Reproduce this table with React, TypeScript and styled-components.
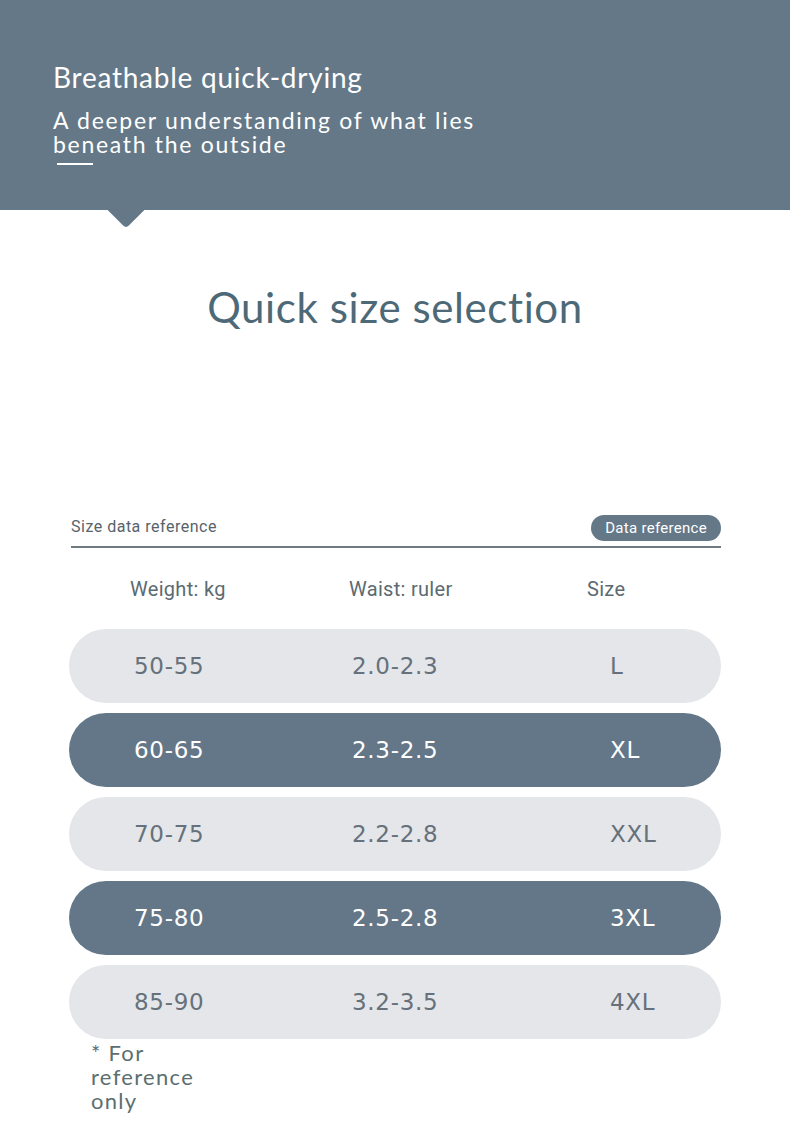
import React from "react";
import styled, { createGlobalStyle } from "styled-components";

const GlobalStyle = createGlobalStyle`
  html, body { margin: 0; padding: 0; background: #fff; }
  body { font-family: Lato, "Noto Sans", sans-serif; }
`;

const Page = styled.div`
  width: 790px; height: 1146px; overflow: hidden; background: #fff;
  display: flex; flex-direction: column;
`;

const Banner = styled.header`
  position: relative; height: 210px; background: #647888; color: #fff;
  padding: 59px 0 0 53px; box-sizing: border-box;
`;

const Pointer = styled.div`
  position: absolute; left: 113px; bottom: -13px; width: 26px; height: 26px;
  background: #647888; transform: rotate(45deg); border-radius: 0 0 4px 0;
`;

const BannerTitle = styled.h1`
  margin: 0; font-weight: 400; font-size: 28px; line-height: 36px; letter-spacing: 0.75px;
`;

const BannerText = styled.p`
  margin: 13px 0 0; font-size: 23px; line-height: 24px; font-weight: 400; width: 460px; letter-spacing: 1.7px;
`;

const Dash = styled.div`
  width: 36px; height: 2px; background: #fff; margin: 7px 0 0 4px;
`;

const Title = styled.h2`
  margin: 72px 0 0; text-align: center; font-size: 42px; line-height: 50px;
  font-weight: 400; color: #4d6977; letter-spacing: 0.6px;
`;

const Table = styled.section`
  margin: 183px 69px 0 69px; display: flex; flex-direction: column;
`;

const TopBar = styled.div`
  display: flex; align-items: center; justify-content: space-between;
  margin-left: 2px; padding-bottom: 3px; border-bottom: 2px solid #6f7b81;
`;

const TopLabel = styled.span`
  font-family: Roboto, sans-serif; font-size: 16px; color: #57636a; letter-spacing: 0.5px;
  margin-bottom: 6px;
`;

const Pill = styled.span`
  background: #647888; color: #fff; border-radius: 13px; height: 26px; line-height: 26px;
  padding: 0 14px; font-family: Roboto, sans-serif; font-size: 15px; letter-spacing: 0.3px; margin-bottom: 2px;
`;

const HeaderRow = styled.div`
  display: grid; grid-template-columns: 219px 238px 1fr; padding: 29px 0 0 61px;
  height: 70px; box-sizing: border-box;
  font-family: Roboto, sans-serif; font-size: 20px; color: #5b6b72; letter-spacing: 0.3px;
`;

const Rows = styled.div`
  display: flex; flex-direction: column; gap: 10px; margin-top: 11px;
`;

const Row = styled.div<{ $dark?: boolean }>`
  display: grid; grid-template-columns: 218px 258px 1fr; align-items: center;
  height: 74px; border-radius: 37px; padding-left: 65px;
  background: ${({ $dark }) => ($dark ? "#637788" : "#e4e6e9")};
  color: ${({ $dark }) => ($dark ? "#ffffff" : "#66717b")};
  font-family: "DejaVu Sans", sans-serif; font-size: 23px; letter-spacing: 0.7px;
`;

const Note = styled.p`
  margin: 2px 0 0 91px; width: 130px; font-size: 22px; line-height: 24px; color: #5c6f70; letter-spacing: 1.3px;
`;

const rows = [
  { w: "50-55", r: "2.0-2.3", s: "L" },
  { w: "60-65", r: "2.3-2.5", s: "XL", dark: true },
  { w: "70-75", r: "2.2-2.8", s: "XXL" },
  { w: "75-80", r: "2.5-2.8", s: "3XL", dark: true },
  { w: "85-90", r: "3.2-3.5", s: "4XL" },
];

export default function App() {
  return (
    <Page>
      <GlobalStyle />
      <Banner>
        <BannerTitle>Breathable quick-drying</BannerTitle>
        <BannerText>A deeper understanding of what lies beneath the outside</BannerText>
        <Dash />
        <Pointer />
      </Banner>
      <Title>Quick size selection</Title>
      <Table>
        <TopBar>
          <TopLabel>Size data reference</TopLabel>
          <Pill>Data reference</Pill>
        </TopBar>
        <HeaderRow>
          <span>Weight: kg</span>
          <span>Waist: ruler</span>
          <span>Size</span>
        </HeaderRow>
        <Rows>
          {rows.map(row => (
            <Row key={row.w} $dark={row.dark}>
              <span>{row.w}</span>
              <span>{row.r}</span>
              <span>{row.s}</span>
            </Row>
          ))}
        </Rows>
      </Table>
      <Note>* For reference only</Note>
    </Page>
  );
}
